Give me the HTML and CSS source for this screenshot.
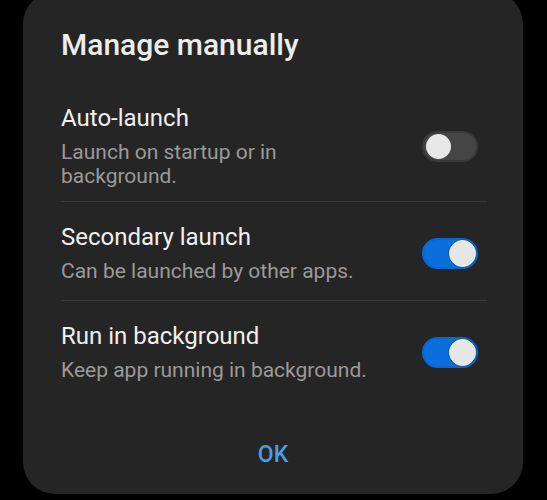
FILE: index.html
```html
<!DOCTYPE html>
<html lang="en">
<head>
<meta charset="utf-8">
<title>Manage manually</title>
<link rel="stylesheet" href="styles.css">
</head>
<body>
<div class="dialog">
  <h1 class="dialog-title">Manage manually</h1>
  <div class="row row-first">
    <div class="row-text">
      <div class="row-title">Auto-launch</div>
      <div class="row-sub">Launch on startup or in<br>background.</div>
    </div>
    <span class="switch"><span class="knob"></span></span>
  </div>
  <div class="row">
    <div class="row-text">
      <div class="row-title">Secondary launch</div>
      <div class="row-sub">Can be launched by other apps.</div>
    </div>
    <span class="switch on"><span class="knob"></span></span>
  </div>
  <div class="row row-last">
    <div class="row-text">
      <div class="row-title">Run in background</div>
      <div class="row-sub">Keep app running in background.</div>
    </div>
    <span class="switch on"><span class="knob"></span></span>
  </div>
  <div class="actions">
    <button class="ok">OK</button>
  </div>
</div>
</body>
</html>
```
FILE: styles.css
```css
html, body {
  margin: 0;
  padding: 0;
  background: #000;
  height: 500px;
  overflow: hidden;
}
body {
  font-family: Roboto, "Noto Sans", sans-serif;
}
.dialog {
  box-sizing: border-box;
  width: 500px;
  height: 502px;
  margin: -8px 0 0 23px;
  background: #252525;
  border-radius: 32px;
  padding: 35px 36px 0 38px;
}
.dialog-title {
  margin: 0 0 20px;
  font-size: 30px;
  line-height: 36px;
  font-weight: 500;
  color: #ededed;
}
.row {
  display: flex;
  align-items: center;
  justify-content: space-between;
  padding: 21px 9px 17px 0;
  border-bottom: 1px solid #3a3a3a;
}
.row-first {
  padding-bottom: 13px;
}
.row-last {
  border-bottom: none;
}
.row-title {
  font-size: 24px;
  line-height: 28px;
  color: #f0f0f0;
}
.row-sub {
  margin-top: 8px;
  font-size: 21px;
  line-height: 24px;
  color: #9a9a9a;
}
.switch {
  position: relative;
  flex: none;
  box-sizing: border-box;
  width: 56px;
  height: 31px;
  border-radius: 16px;
  background: #454545;
  border: 2px solid #3a3a3a;
}
.switch .knob {
  position: absolute;
  top: 1px;
  left: 2px;
  width: 25px;
  height: 25px;
  border-radius: 50%;
  background: #e8e8e8;
}
.switch.on {
  background: #0a6fdc;
  border-color: #0a66cc;
}
.switch.on .knob {
  left: auto;
  right: 0;
  top: 0;
  width: 27px;
  height: 27px;
  box-sizing: border-box;
  border: 1.5px solid #f4f4f4;
  box-shadow: 0 0 0 1px #0b5dbb;
  background: #e6e6e6;
}
.actions {
  display: flex;
  justify-content: center;
  margin-top: 42px;
  padding-right: 2px;
}
.ok {
  background: none;
  border: none;
  padding: 0;
  font-family: Roboto, "Noto Sans", sans-serif;
  font-size: 23px;
  line-height: 28px;
  font-weight: 500;
  color: #4c9be6;
}
```
